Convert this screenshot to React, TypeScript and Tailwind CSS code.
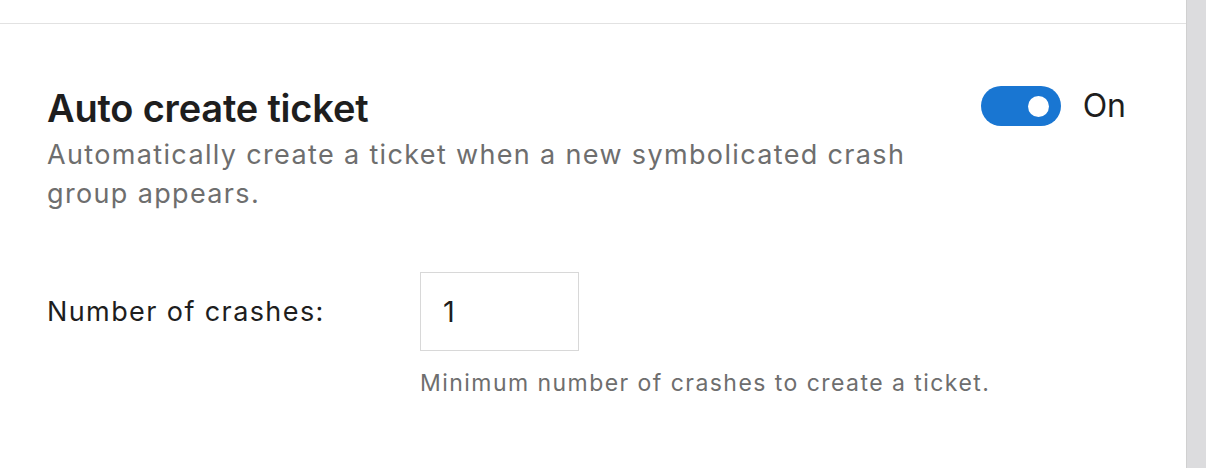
export default function App() {
  return (
    <div className="flex h-[468px] w-[1206px] overflow-hidden bg-white font-['Inter',sans-serif]">
      <main className="flex-1">
        <div className="h-[24px] border-b border-[#e2e2e2]" />

        <section className="pl-[47px] pr-[60px] pt-[62px]">
          <div className="flex items-start justify-between">
            <div className="max-w-[880px]">
              <h2 className="text-[38px] font-semibold leading-[44px] tracking-[-0.2px] text-[#1e1e1e]">
                Auto create ticket
              </h2>
              <p className="mt-[5px] text-[27px] leading-[39px] tracking-[1.35px] text-[#6e6e6e]">
                Automatically create a ticket when a new symbolicated crash
                group appears.
              </p>
            </div>

            <div className="flex items-center gap-[22px]">
              <button
                type="button"
                className="flex h-[40px] w-[80px] items-center justify-end rounded-full bg-[#1976d2] pr-[12px]"
              >
                <span className="h-[21px] w-[21px] rounded-full bg-white" />
              </button>
              <span className="text-[32px] leading-[40px] text-[#1e1e1e]">On</span>
            </div>
          </div>

          <div className="mt-[59px] flex items-start">
            <label className="w-[373px] pt-[24px] text-[27px] leading-[32px] tracking-[1.4px] text-[#1e1e1e]">
              Number of crashes:
            </label>
            <div>
              <div className="flex h-[79px] w-[159px] items-center border border-[#d8d8d8] pl-[22px] text-[29px] text-[#1e1e1e]">
                1
              </div>
              <p className="mt-[18px] text-[23px] leading-[28px] tracking-[1.45px] text-[#6e6e6e]">
                Minimum number of crashes to create a ticket.
              </p>
            </div>
          </div>
        </section>
      </main>
      <div className="w-[20px] border-l border-[#d0d0d0] bg-[#dcdcde]" />
    </div>
  );
}
